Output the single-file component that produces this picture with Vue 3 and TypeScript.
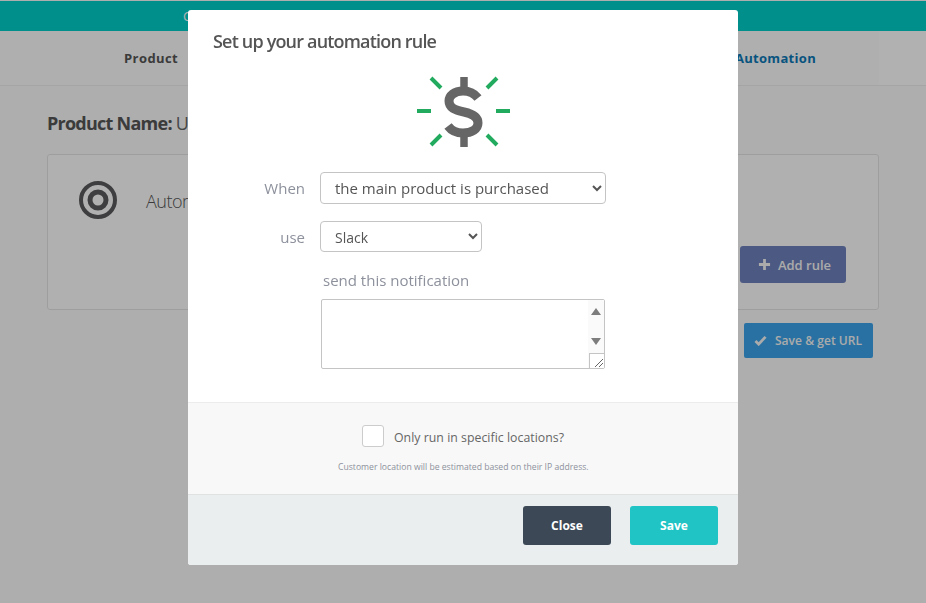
<script setup lang="ts">
const whenOptions: string[] = ['the main product is purchased']
const useOptions: string[] = ['Slack']
</script>

<template>
  <div class="page">
    <div class="topbar"><span class="topbar-text">C</span></div>
    <nav class="nav">
      <div class="tabs">
        <a class="tab">Product</a>
        <a class="tab active">Automation</a>
      </div>
    </nav>
    <main class="content">
      <h1 class="product-name"><strong>Product Name:</strong> Untitled</h1>
      <section class="card">
        <svg class="target" viewBox="0 0 38 38" width="38" height="38" aria-hidden="true">
          <circle cx="19" cy="19" r="17" fill="none" stroke="#5a5a5c" stroke-width="4" />
          <circle cx="19" cy="19" r="8" fill="none" stroke="#5a5a5c" stroke-width="5" />
        </svg>
        <span class="card-title">Automation</span>
        <button class="add-rule" type="button">
          <svg viewBox="0 0 14 14" width="13" height="13" aria-hidden="true">
            <path d="M7 1v12M1 7h12" stroke="#f5f5f5" stroke-width="3" />
          </svg>
          Add rule
        </button>
      </section>
      <div class="save-row">
        <button class="save-url" type="button">
          <svg viewBox="0 0 14 12" width="13" height="11" aria-hidden="true">
            <path d="M1.5 6.5 5 10l7.5-8" fill="none" stroke="#f5f5f5" stroke-width="3" />
          </svg>
          Save &amp; get URL
        </button>
      </div>
    </main>

    <div class="overlay">
      <div class="modal">
        <header class="modal-head">
          <h2>Set up your automation rule</h2>
        </header>
        <div class="modal-body">
          <svg class="dollar" viewBox="417 76 94 71" width="94" height="71" aria-hidden="true">
            <g stroke="#22ab5e" stroke-width="4" fill="none">
              <path d="M417 111h14M496 111h14M431 78l10 10M497 78l-10 10M431 145l10-10M497 145l-10-10" />
            </g>
            <path d="M464 77v14M464 133v14" stroke="#666" stroke-width="7.5" fill="none" />
            <path d="M478 98C474 93 469 91 463 91C454 91 449 96 449 101C449 108 455 110 464 112C473 114 478 117 478 123C478 129 472 133 463 133C456 133 451 130 448 126" stroke="#666" stroke-width="9" fill="none" />
          </svg>
          <div class="field field-when">
            <label class="label">When</label>
            <select class="select select-when">
              <option v-for="o in whenOptions" :key="o">{{ o }}</option>
            </select>
          </div>
          <div class="field field-use">
            <label class="label">use</label>
            <select class="select select-use">
              <option v-for="o in useOptions" :key="o">{{ o }}</option>
            </select>
          </div>
          <p class="send-label">send this notification</p>
          <div class="textarea-box">
            <textarea class="textarea"></textarea>
            <div class="scrollbar">
              <svg viewBox="0 0 12 37" width="12" height="37" aria-hidden="true">
                <path d="M6 0 11 7H1ZM1 30H11L6 37Z" fill="#7d7d7d" />
              </svg>
              <div class="corner">
                <svg viewBox="0 0 14 14" width="14" height="14" aria-hidden="true">
                  <path d="M5 13 13 5M9 13 13 9" stroke="#666" stroke-width="1" />
                </svg>
              </div>
            </div>
          </div>
        </div>
        <div class="modal-location">
          <label class="check-row">
            <span class="checkbox"></span>
            <span class="check-text">Only run in specific locations?</span>
          </label>
          <p class="hint">Customer location will be estimated based on their IP address.</p>
        </div>
        <footer class="modal-foot">
          <button class="btn btn-close" type="button">Close</button>
          <button class="btn btn-save" type="button">Save</button>
        </footer>
      </div>
    </div>
  </div>
</template>

<style>
html, body { margin: 0; background: #f9f9f9; }
</style>

<style scoped>
.page {
  position: relative;
  min-height: 603px;
  overflow: hidden;
  background: #f9f9f9;
  font-family: "Open Sans", "Noto Sans", sans-serif;
  color: #4a4a4a;
}
.topbar {
  height: 30px;
  margin-top: 1px;
  background: #01cdc8;
  padding-left: 183px;
  color: #fff;
  font-size: 13px;
  line-height: 30px;
}
.nav {
  height: 54px;
  padding: 0 47px 0 0;
  background: #fefefe;
  border-bottom: 1px solid #ececec;
}
.tabs {
  height: 54px;
  display: flex;
  align-items: center;
  justify-content: space-between;
  padding: 0 63px 0 124px;
  background: #fbfbfb;
  font-size: 13px;
  font-weight: 700;
  letter-spacing: 0.42px;
  color: #555;
}
.tab.active { color: #0b78b6; letter-spacing: 0.3px; }
.content { padding: 24px 47px 0; }
.product-name {
  margin: 0;
  font-size: 18px;
  line-height: 26px;
  font-weight: 400;
  letter-spacing: -0.75px;
  color: #666;
}
.product-name strong { color: #555; font-weight: 700; }
.card {
  box-sizing: border-box;
  height: 156px;
  margin-top: 18px;
  padding: 26px 32px 26px 31px;
  display: flex;
  align-items: flex-start;
  border: 1px solid #e3e3e3;
  border-radius: 3px;
  background: #fdfdfd;
}
.target { flex: none; }
.card-title {
  margin: 8px 0 0 29px;
  font-size: 18px;
  font-weight: 300;
  letter-spacing: -0.5px;
  color: #555;
}
.add-rule {
  margin: 65px 0 0 auto;
  width: 106px;
  height: 37px;
  border: 0;
  border-radius: 3px;
  background: #6e80ba;
  color: #f5f5f5;
  font: 600 13px "Open Sans", sans-serif;
  display: flex;
  align-items: center;
  justify-content: center;
  gap: 7px;
  padding: 0 0 0 3px;
}
.save-row { display: flex; justify-content: flex-end; padding: 13px 6px 0 0; }
.save-url {
  width: 129px;
  height: 35px;
  border: 0;
  border-radius: 2px;
  background: #3ca3e9;
  color: #f5f5f5;
  font: 600 12px "Open Sans", sans-serif;
  letter-spacing: 0.05px;
  display: flex;
  align-items: center;
  justify-content: center;
  gap: 8px;
  padding: 0 1px 0 0;
}
.overlay {
  position: fixed;
  inset: 0;
  background: rgba(0, 0, 0, 0.3);
}
.modal {
  width: 550px;
  height: 555px;
  margin: 10px 0 0 188px;
  display: flex;
  flex-direction: column;
  background: #fff;
  border-radius: 3px;
  overflow: hidden;
}
.modal-head { padding: 19px 25px 0; }
.modal-head h2 {
  margin: 0;
  font-size: 18px;
  line-height: 24px;
  font-weight: 600;
  letter-spacing: -0.82px;
  color: #555;
}
.modal-body {
  height: 350px;
  box-sizing: border-box;
  border-bottom: 1px solid #ececec;
  display: flex;
  flex-direction: column;
  align-items: flex-start;
}
.dollar { display: block; margin: 23px 0 0 229px; }
.field { display: flex; align-items: center; }
.field-when { margin-top: 25px; }
.field-use { margin-top: 17px; }
.label {
  width: 117px;
  margin-right: 15px;
  text-align: right;
  font-size: 15px;
  color: #8d919c;
}
.select {
  box-sizing: border-box;
  border: 1px solid #c4c4c4;
  border-radius: 4px;
  background-color: #fff;
  color: #555;
  font-family: "Open Sans", sans-serif;
  padding: 0 10px;
}
.select-when { width: 286px; height: 32px; font-size: 15px; }
.select-use { width: 162px; height: 31px; font-size: 14px; padding-top: 2px; }
.send-label {
  margin: 18px 0 0 135px;
  font-size: 15px;
  line-height: 21px;
  color: #8d919c;
}
.textarea-box {
  box-sizing: border-box;
  width: 284px;
  height: 70px;
  margin: 8px 0 0 133px;
  display: flex;
  border: 1px solid #c4c4c4;
  border-radius: 2px;
}
.textarea {
  flex: 1;
  min-width: 0;
  border: 0;
  padding: 4px;
  resize: none;
  outline: none;
  background: transparent;
}
.scrollbar {
  width: 16px;
  flex: none;
  position: relative;
  background: #fafafa;
  display: flex;
  justify-content: center;
  align-items: flex-start;
  padding-top: 8px;
  box-sizing: border-box;
}
.corner {
  position: absolute;
  right: 0;
  bottom: 0;
  width: 14px;
  height: 14px;
  background: #fff;
  border-left: 1px solid #c4c4c4;
  border-top: 1px solid #c4c4c4;
}
.corner svg { display: block; }
.modal-location {
  height: 91px;
  background: #f8f8f8;
  border-bottom: 1px solid #e0e2e2;
  box-sizing: content-box;
}
.check-row {
  display: flex;
  align-items: flex-start;
  gap: 10px;
  padding: 22px 0 0 174px;
  font-size: 12.3px;
  line-height: 22px;
  letter-spacing: 0.03px;
  color: #666;
}
.check-text { margin-top: 2px; }
.checkbox {
  box-sizing: border-box;
  width: 22px;
  height: 22px;
  border: 1px solid #ccc;
  border-radius: 3px;
  background: #fff;
}
.hint {
  margin: 12px 0 0 150px;
  font-size: 8.65px;
  line-height: 12px;
  color: #8d919c;
}
.modal-foot {
  flex: 1;
  display: flex;
  justify-content: flex-end;
  gap: 19px;
  padding: 11px 20px 0 0;
  background: #ebeeef;
}
.btn {
  width: 88px;
  height: 39px;
  border: 0;
  border-radius: 3px;
  color: #fff;
  font: 700 12px "Open Sans", sans-serif;
}
.btn-close { background: #3c4855; }
.btn-save { background: #20c4c4; }
</style>
